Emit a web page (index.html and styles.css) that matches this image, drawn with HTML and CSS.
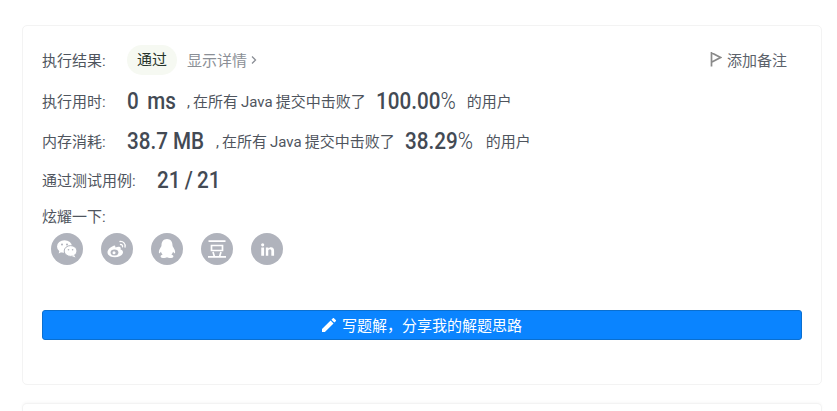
FILE: index.html
```html
<!DOCTYPE html>
<html lang="zh">
<head>
<meta charset="utf-8">
<title>提交结果</title>
<link rel="stylesheet" href="styles.css">
</head>
<body>
<main class="page">
  <section class="card">
    <div class="row row-result">
      <span class="label">执行结果:</span>
      <span class="badge">通过</span>
      <a class="details">显示详情<svg class="chev" width="6" height="10" viewBox="0 0 6 10"><path d="M1 1.500l3.500 3.500-3.500 3.500" fill="none" stroke="currentColor" stroke-width="1.300"/></svg></a>
      <a class="note"><svg class="flag" width="12" height="16" viewBox="0 0 12 16"><path d="M1.500 1v14.500M1.500 1.800l9 4.700-9 4.700" fill="none" stroke="#8a8a8a" stroke-width="1.700"/></svg>添加备注</a>
    </div>
    <div class="row row-time">
      <span class="label">执行用时:</span>
      <span class="big w-time"><b class="squeeze spaced">0 ms</b></span>
      <span class="small">, 在所有 Java 提交中击败了</span>
      <span class="big w-pct1"><b class="squeeze">100.00<i class="percent">%</i></b></span>
      <span class="small">的用户</span>
    </div>
    <div class="row row-mem">
      <span class="label">内存消耗:</span>
      <span class="big w-mem"><b class="squeeze">38.7 MB</b></span>
      <span class="small">, 在所有 Java 提交中击败了</span>
      <span class="big w-pct2"><b class="squeeze">38.29<i class="percent">%</i></b></span>
      <span class="small">的用户</span>
    </div>
    <div class="row row-tests">
      <span class="label wide">通过测试用例:</span>
      <span class="big"><b class="squeeze tight">21 / 21</b></span>
    </div>
    <div class="share-label">炫耀一下:</div>
    <div class="share">
      <a class="circle"><svg width="22" height="20" viewBox="0 0 22 20"><ellipse cx="8.500" cy="7.500" rx="7.500" ry="6.300" fill="#fff"/><path d="M3.500 11.500l-.8 3 3.400-1.700z" fill="#fff"/><ellipse cx="14.600" cy="12" rx="6.400" ry="5.400" fill="#fff" stroke="#b0b3bc" stroke-width="1"/><path d="M18 16l1.500 2.400-3.800-1.400z" fill="#fff"/><circle cx="6" cy="5.600" r="1" fill="#b0b3bc"/><circle cx="11" cy="5.600" r="1" fill="#b0b3bc"/><circle cx="12.500" cy="10.800" r=".8" fill="#b0b3bc"/><circle cx="16.600" cy="10.800" r=".8" fill="#b0b3bc"/></svg></a>
      <a class="circle"><svg width="22" height="20" viewBox="0 0 22 20"><path d="M9 6.500c-3.800.7-7.500 3.900-7.500 7 0 2.800 3.400 4.800 7.500 4.800 4.500 0 8-2.400 8-5 0-1.800-1.600-2.500-2.500-2.700.5-1.400.2-2.600-1.300-2.800-1.200-.2-2.500.2-3.700.7z" fill="#fff"/><ellipse cx="8.500" cy="13.500" rx="3.900" ry="3" fill="#b0b3bc"/><circle cx="8" cy="13.800" r="1.500" fill="#fff"/><path d="M14 2.500c3.200-.4 5.800 2.200 5 5.500M14.500 5.500c1.400-.2 2.400 1 2 2.300" fill="none" stroke="#fff" stroke-width="1.300" stroke-linecap="round"/></svg></a>
      <a class="circle"><svg width="20" height="22" viewBox="0 0 20 22"><path d="M10 1c-3.600 0-5.500 2.800-5.500 6.200 0 .8-.2 1.200-.6 1.800-1.200 1.700-2.400 4.200-1.900 6 .3.900 1.200-.2 1.900-1.200.3 1.100.9 2 1.700 2.800-1.200.5-2 1-2 1.800 0 1 1.800 1.600 3.600 1.600 1.200 0 2.200-.3 2.800-.8.600.5 1.600.8 2.800.8 1.800 0 3.600-.6 3.600-1.600 0-.8-.8-1.300-2-1.800.8-.8 1.400-1.700 1.700-2.800.7 1 1.600 2.100 1.900 1.200.5-1.800-.7-4.300-1.900-6-.4-.6-.6-1-.6-1.800C15.500 3.800 13.600 1 10 1z" fill="#fff"/></svg></a>
      <a class="circle"><svg width="20" height="20" viewBox="0 0 20 20"><path d="M1.500 2.200h17M4.500 6.500h11v5h-11zM6 13l1.300 4.200M14 13l-1.300 4.200M1 17.800h18" fill="none" stroke="#fff" stroke-width="1.700"/></svg></a>
      <a class="circle"><svg width="15" height="15" viewBox="0 0 18 18"><circle cx="3.200" cy="3.400" r="1.900" fill="#fff"/><path d="M1.500 6.500h3.400v10H1.500zM7 6.500h3.100v1.400c.6-1 1.700-1.700 3.100-1.700 2.600 0 3.700 1.600 3.700 4.300v6h-3.300v-5.500c0-1.400-.5-2.300-1.700-2.300-1.300 0-2 .9-2 2.300v5.500H7z" fill="#fff"/></svg></a>
    </div>
    <button class="solution"><svg class="pencil" width="14" height="14" viewBox="3 3 18 18"><path d="M3 17.250V21h3.750L17.810 9.940l-3.750-3.750L3 17.250zM20.710 7.040a1 1 0 0 0 0-1.410l-2.340-2.340a1 1 0 0 0-1.410 0l-1.830 1.830 3.750 3.750 1.830-1.830z" fill="#fff"/></svg>写题解，分享我的解题思路</button>
  </section>
  <section class="card next"></section>
</main>
</body>
</html>
```

FILE: styles.css
```css
* { box-sizing: border-box; }
html, body { margin: 0; height: 100%; }
body {
  background: #fff;
  color: #4a4f57;
  font-family: "Roboto", "Noto Sans CJK SC", sans-serif;
  font-size: 15px;
  overflow: hidden;
}
.page { padding: 25px 15px 0 22px; height: 411px; overflow: hidden; }
.card {
  width: 800px;
  height: 360px;
  padding: 19px 19px 0;
  background: #fff;
  border: 1px solid #f3f3f3;
  border-radius: 5px;
  display: flex;
  flex-direction: column;
}
.card.next {
  margin-top: 18px;
  height: 8px;
  padding: 0;
  border-bottom: 0;
  border-radius: 5px 5px 0 0;
  box-shadow: 0 -1px 3px rgba(0, 0, 0, .03);
}
.row { display: flex; align-items: center; height: 26px; white-space: nowrap; flex: none; }
.row-result { height: 30px; }
.row-time { margin-top: 13px; }
.row-mem { margin-top: 14px; }
.row-tests { margin-top: 13px; }
.label { color: #4f555e; width: 85px; flex: none; padding-bottom: 2px; }
.label.wide { width: 115px; }
.badge {
  width: 50px;
  height: 30px;
  line-height: 31px;
  text-align: center;
  border-radius: 15px;
  background: #f6f9f2;
  color: #26332a;
}
.details { margin-left: 10px; color: #8b8f96; display: flex; align-items: center; padding-bottom: 2px; }
.chev { margin-left: 4px; margin-top: 1px; }
.note { margin-left: auto; margin-right: 15px; display: flex; align-items: center; color: #5c626b; padding-bottom: 2px; }
.flag { margin-right: 5px; }
.big {
  display: block;
  flex: none;
  height: 26px;
  line-height: 26px;
  color: #434a54;
  font-size: 24px;
}
.squeeze {
  display: inline-block;
  font-weight: 500;
  transform: scaleX(.86);
  transform-origin: left center;
}
.spaced { word-spacing: 4px; }
.tight { word-spacing: -1px; }
.w-time { width: 50px; }
.w-mem { width: 79px; }
.w-pct1 { width: 81px; }
.w-pct2 { width: 71px; }
.small { margin: 0 10px; padding-bottom: 2px; color: #4f555e; word-spacing: -.7px; }
.percent { font-style: normal; font-weight: 300; }
.share-label { margin-top: 14px; height: 20px; line-height: 21px; color: #4f555e; flex: none; }
.share { display: flex; gap: 18px; margin-top: 6px; padding-left: 9px; flex: none; }
.circle {
  width: 32px;
  height: 32px;
  border-radius: 50%;
  background: #b0b3bc;
  display: flex;
  align-items: center;
  justify-content: center;
}
.solution {
  margin-top: 45px;
  height: 30px;
  width: 760px;
  flex: none;
  border: 1px solid #0a6fd0;
  border-radius: 3px;
  background: #0a84ff;
  color: #fff;
  font: 15px "Noto Sans CJK SC", sans-serif;
  display: flex;
  align-items: center;
  justify-content: center;
  padding: 0 0 2px;
}
.pencil { margin-right: 6px; margin-top: 2px; }
```
